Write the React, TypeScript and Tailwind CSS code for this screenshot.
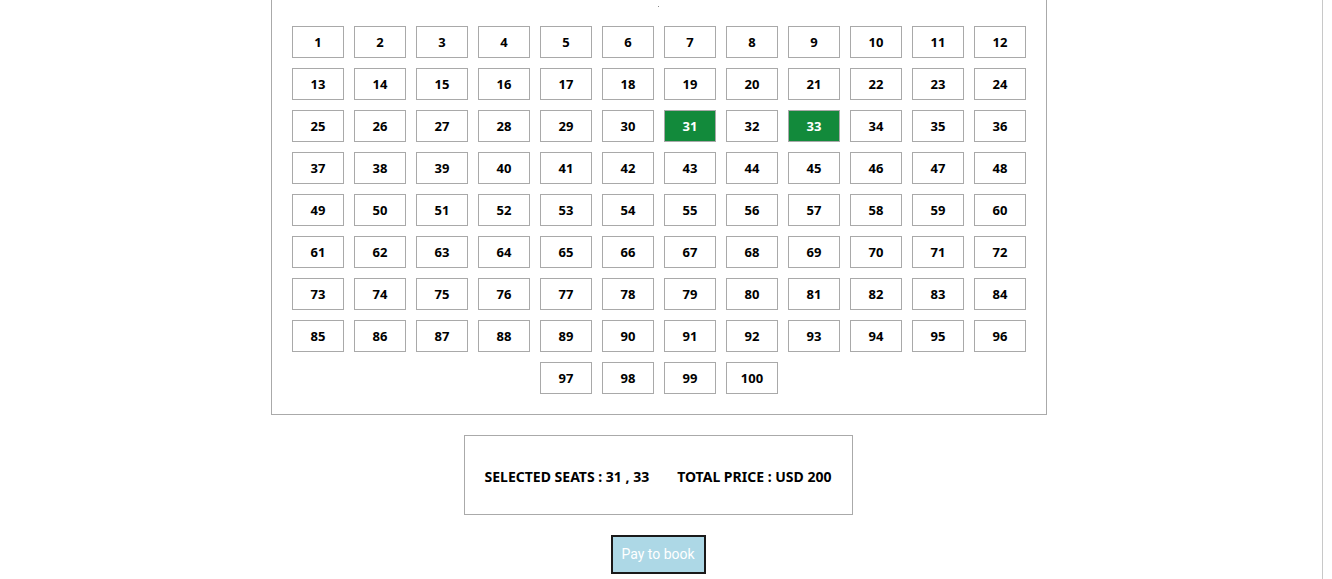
import React from "react";

const seats = Array.from({ length: 100 }, (_, i) => i + 1);
const selected = [31, 33];

export default function App() {
  return (
    <div className="min-h-screen bg-white overflow-hidden" style={{ fontFamily: "'Noto Sans', 'Open Sans', sans-serif" }}>
      <div className="w-[1323px] h-[579px] border-r border-[#c8c8c8] pr-[6px] flex flex-col items-center">
        {/* Seat panel */}
        <div className="relative -mt-[20px] ml-[2px] w-[776px] border border-[#aaaaaa] pt-[45px] pb-[20px] px-[20px]">
          <div className="absolute left-[386px] top-[25px] w-px h-px bg-[#888]" />
          <div className="flex flex-wrap justify-center gap-[10px]">
            {seats.map((n) => {
              const on = selected.includes(n);
              return (
                <div
                  key={n}
                  className={`w-[52px] h-[32px] border pt-[2px] flex items-center justify-center text-[13px] font-bold ${
                    on ? "bg-[#128a3b] text-white border-[#a9a9a9]" : "bg-white text-black border-[#a9a9a9]"
                  }`}
                >
                  {n}
                </div>
              );
            })}
          </div>
        </div>

        {/* Summary */}
        <div className="mt-[20px] w-[389px] h-[80px] border border-[#aaaaaa] pt-[2px] flex items-center justify-center gap-[28px] text-[14px] font-bold text-black">
          <span>SELECTED SEATS : 31 , 33</span>
          <span>TOTAL PRICE : USD 200</span>
        </div>

        {/* Pay */}
        <button
          className="mt-[20px] w-[95px] h-[39px] bg-[#add8e6] border-2 border-[#1a1a1a] text-white text-[14px]"
          style={{ fontFamily: "Roboto, Arial, sans-serif" }}
        >
          Pay to book
        </button>
      </div>
    </div>
  );
}
